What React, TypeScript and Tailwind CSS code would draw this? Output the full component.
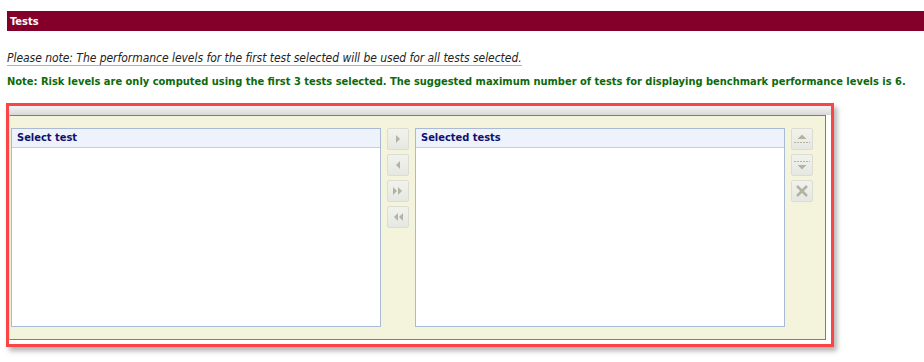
import React from "react";

const Btn = ({ children }: { children: React.ReactNode }) => (
  <div className="w-[22px] h-[22px] rounded-[2px] border border-[#dcdcd2] bg-gradient-to-b from-[#f2f2ec] to-[#e5e8e2] flex items-center justify-center">
    {children}
  </div>
);

const C = "#b3b3a4";

export default function App() {
  return (
    <div className="w-[924px] h-[362px] bg-white pt-[11px] pl-[7px] font-[DejaVu_Sans_Condensed,DejaVu_Sans,sans-serif]">
      <div className="h-[20px] bg-[#84002a] text-white font-bold text-[11px] pl-[3px] flex items-center leading-none">Tests</div>
      <div className="mt-[21px] h-[14px] flex">
        <span className="italic text-[12px] leading-[13px] tracking-[-0.04px] text-[#222] border-b border-[#b0b0b0]">
          Please note: The performance levels for the first test selected will be used for all tests selected.
        </span>
      </div>
      <div className="mt-[9px] text-[11px] font-bold text-[#0b6a0b] leading-[13px] whitespace-nowrap">
        Note: Risk levels are only computed using the first 3 tests selected. The suggested maximum number of tests for displaying benchmark performance levels is 6.
      </div>
      <div className="ml-[-1px] mt-[15px] w-[828px] h-[244px] border-[3px] border-[#fb4446] shadow-[3px_4px_5px_rgba(0,0,0,0.3)] bg-white flex flex-col">
        <div className="h-[9px] bg-gradient-to-b from-[#f4f4f4] to-[#d8d8d8]" />
        <div className="flex-1 mr-[5px] mb-[4px] bg-[#f4f4dc] border-t border-r border-b border-[#7d7d7d] border-l border-l-[#e0e0e0] pt-[12px] pb-[12px] pl-[1px] flex gap-[6px]">
          <div className="w-[370px] h-full bg-white border border-[#a8bad6] flex flex-col">
            <div className="h-[19px] bg-[#eef2fb] border-b border-[#c3cede] text-[11px] font-bold text-[#101070] pl-[5px] flex items-center">Select test</div>
          </div>
          <div className="flex flex-col gap-[4px]">
            <Btn>
              <svg width="10" height="10" viewBox="0 0 10 10"><path d="M3 1 L7 5 L3 9 Z" fill={C} /></svg>
            </Btn>
            <Btn>
              <svg width="10" height="10" viewBox="0 0 10 10"><path d="M7 1 L3 5 L7 9 Z" fill={C} /></svg>
            </Btn>
            <Btn>
              <svg width="12" height="10" viewBox="0 0 12 10"><path d="M1 1 L5 5 L1 9 Z M6 1 L10 5 L6 9 Z" fill={C} /></svg>
            </Btn>
            <Btn>
              <svg width="12" height="10" viewBox="0 0 12 10"><path d="M6 1 L2 5 L6 9 Z M11 1 L7 5 L11 9 Z" fill={C} /></svg>
            </Btn>
          </div>
          <div className="w-[370px] h-full bg-white border border-[#a8bad6] flex flex-col">
            <div className="h-[19px] bg-[#eef2fb] border-b border-[#c3cede] text-[11px] font-bold text-[#101070] pl-[5px] flex items-center">Selected tests</div>
          </div>
          <div className="flex flex-col gap-[4px]">
            <Btn>
              <svg width="18" height="18" viewBox="0 0 18 18"><path d="M4.5 9 L9 4.5 L13.5 9 Z" fill={C} /><path d="M1 12.5 H17" stroke={C} strokeWidth="1" strokeDasharray="2 1" /></svg>
            </Btn>
            <Btn>
              <svg width="18" height="18" viewBox="0 0 18 18"><path d="M1 5.5 H17" stroke={C} strokeWidth="1" strokeDasharray="2 1" /><path d="M4.5 9 L9 13.5 L13.5 9 Z" fill={C} /></svg>
            </Btn>
            <Btn>
              <svg width="14" height="14" viewBox="0 0 14 14"><path d="M2 2 L12 12 M12 2 L2 12" stroke={C} strokeWidth="2.6" /></svg>
            </Btn>
          </div>
        </div>
      </div>
    </div>
  );
}
